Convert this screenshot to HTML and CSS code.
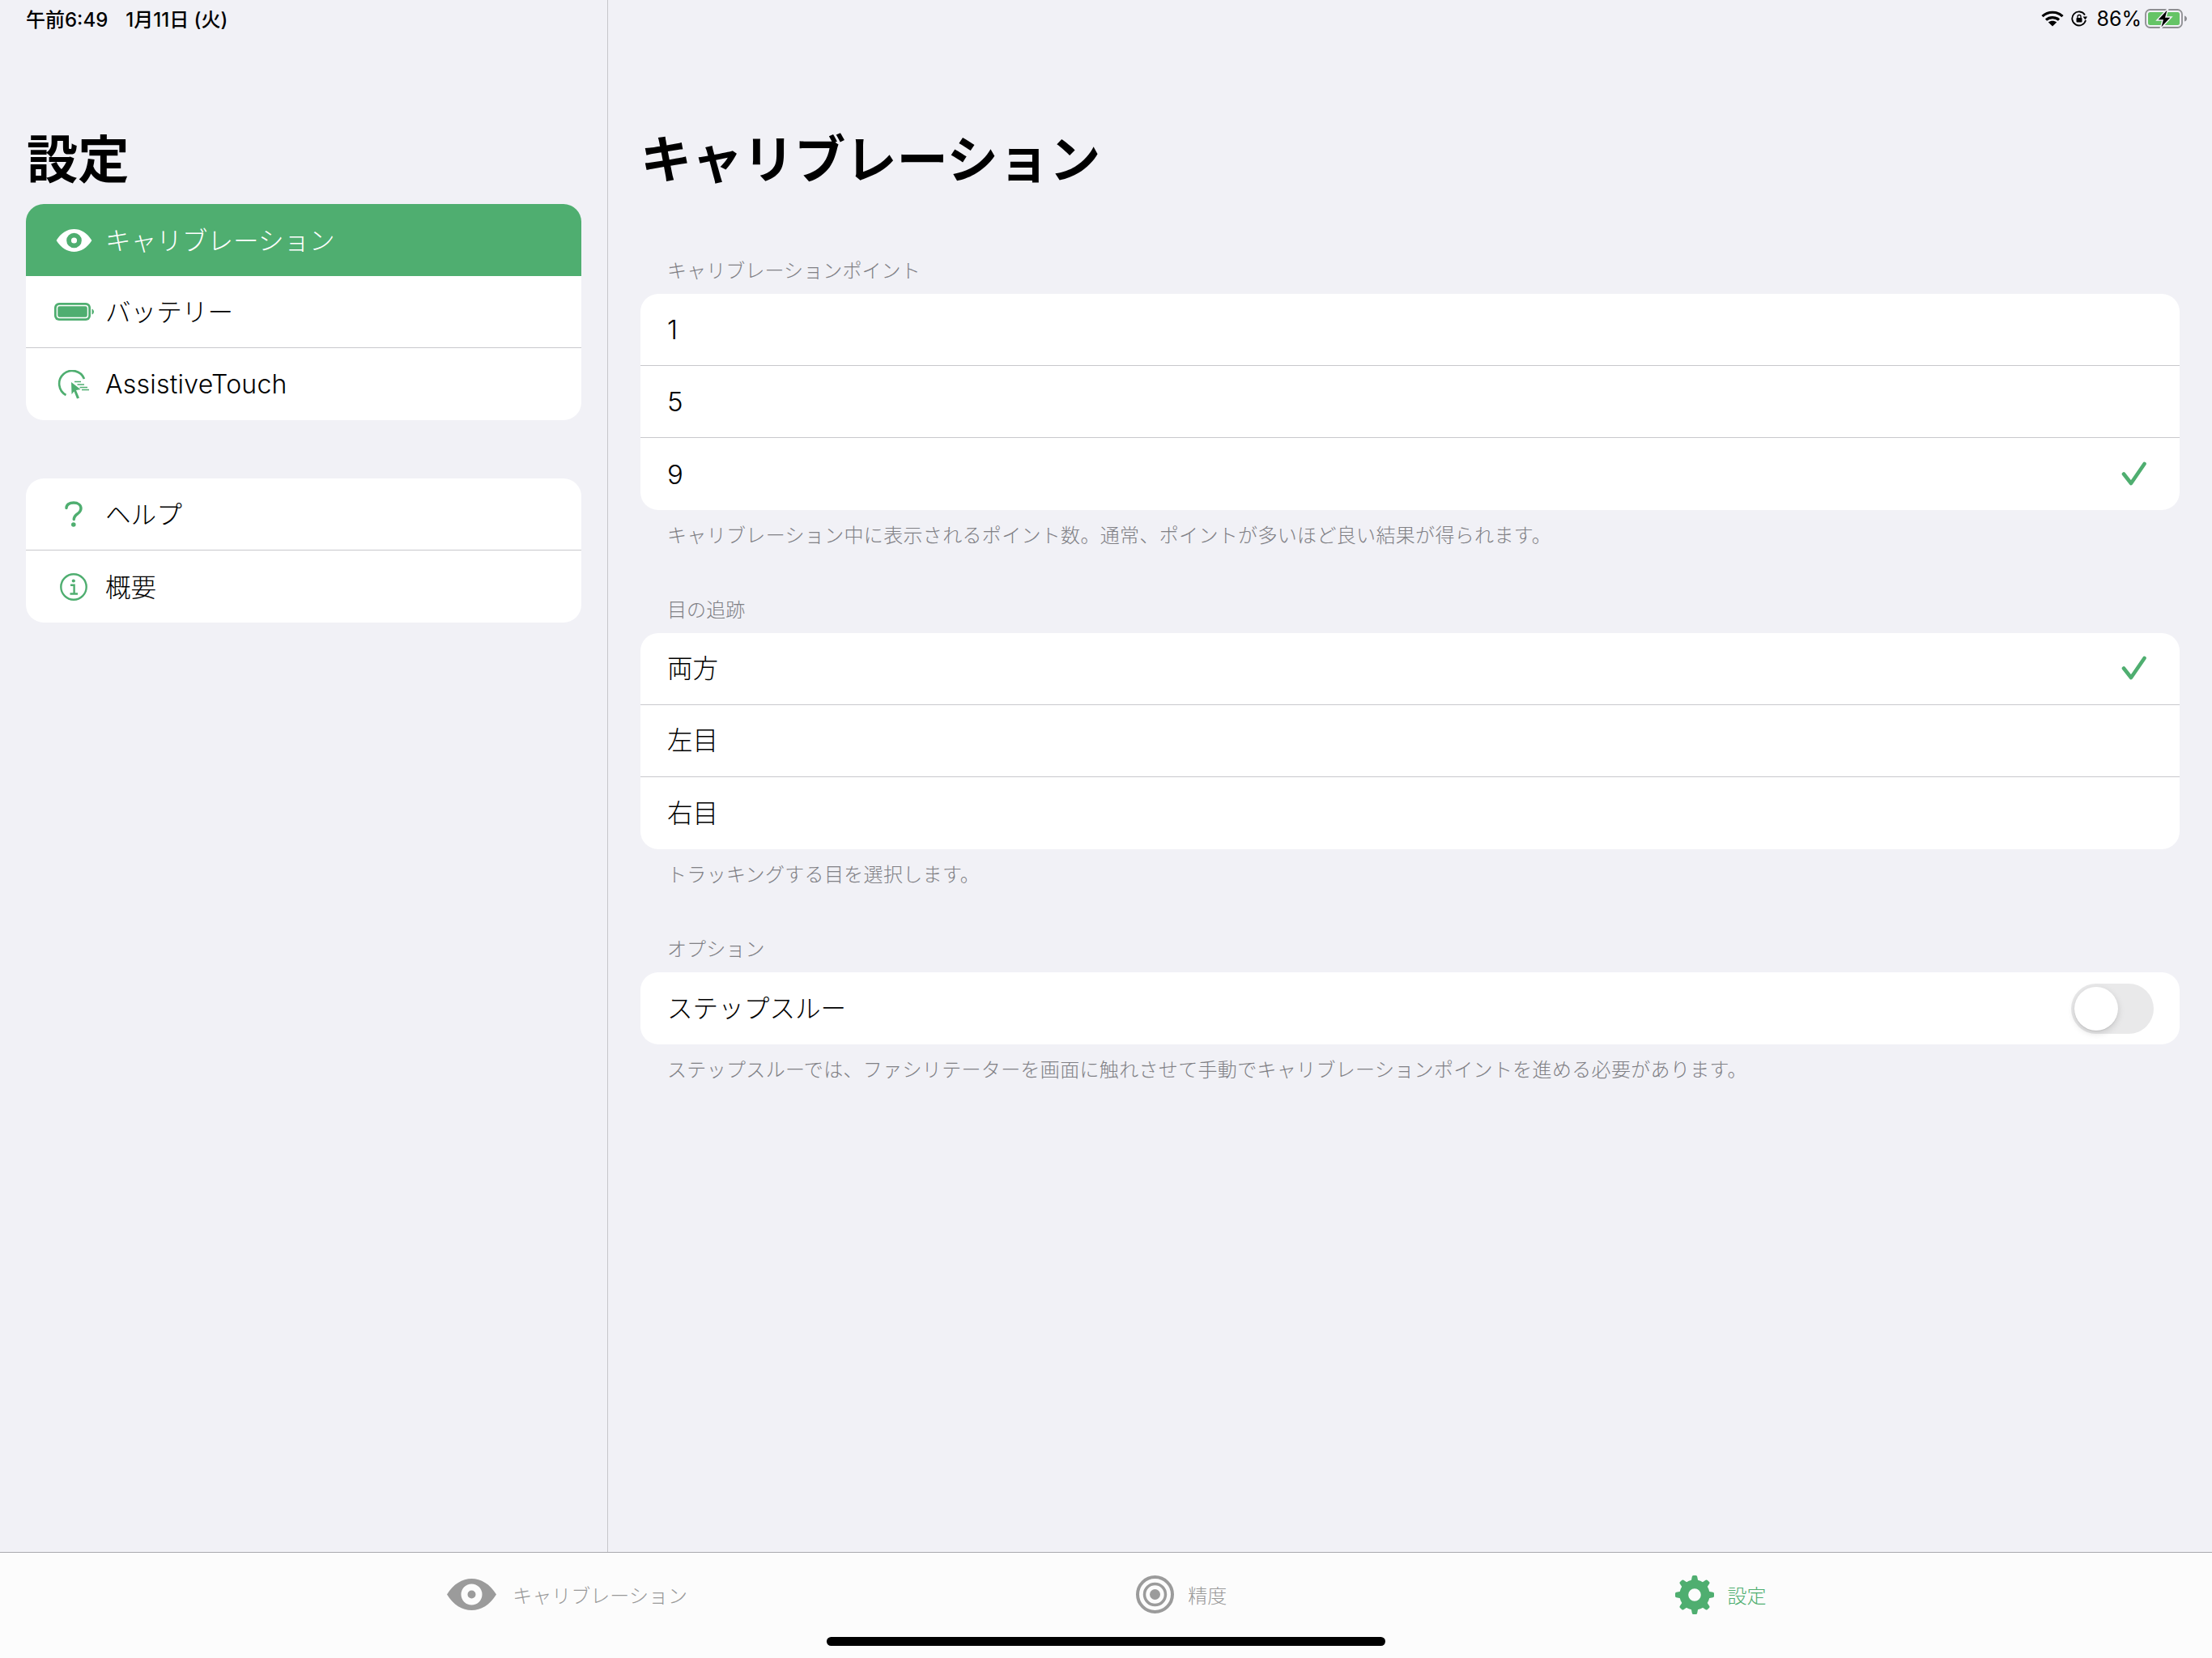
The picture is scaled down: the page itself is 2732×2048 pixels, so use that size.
FILE: index.html
```html
<!DOCTYPE html>
<html lang="ja">
<head>
<meta charset="utf-8">
<title>設定</title>
<link rel="stylesheet" href="styles.css">
</head>
<body>
<svg class="defs" width="0" height="0" aria-hidden="true">
  <symbol id="eye" viewBox="0 0 61 39">
    <path fill="currentColor" fill-rule="evenodd" d="M0 19.5C8 6.500 19 0 30.500 0S53 6.500 61 19.500C53 32.500 42 39 30.500 39S8 32.500 0 19.500ZM17.500 19.500a13 13 0 1 0 26 0a13 13 0 1 0-26 0ZM25.500 19.500a5 5 0 1 1 10 0a5 5 0 1 1-10 0Z"/>
  </symbol>
</svg>

<div class="status">
  <div class="status-left"><span>午前6:49</span><span>1月11日 (火)</span></div>
  <div class="status-right">
    <svg class="ic-wifi" viewBox="0 0 28 20" fill="none" stroke="#000" stroke-width="3.200">
      <path d="M1.500 7.200C8.500 .6 19.500 .6 26.500 7.200"/>
      <path d="M6 11.600C10.500 7.500 17.500 7.500 22 11.600"/>
      <path fill="#000" stroke="none" d="M14 19.500L8.800 14.600C11.800 12 16.200 12 19.200 14.600Z"/>
    </svg>
    <svg class="ic-lock" viewBox="0 0 20 20" fill="none" stroke="#000" stroke-width="1.800">
      <path d="M18 12A8.500 8.500 0 1 1 17 5.500"/>
      <path fill="#000" stroke="none" d="M14.500 7.500H20L17.500 11.500Z"/>
      <rect fill="#000" stroke="none" x="6.500" y="9" width="7" height="5.500" rx="1"/>
      <path stroke-width="1.300" d="M8 9.500V7.500a2 2 0 0 1 4 0V9.500"/>
    </svg>
    <span class="pct">86%</span>
    <svg class="ic-batt" viewBox="0 0 53 26">
      <rect x="1" y="2" width="45" height="22" rx="5.500" fill="none" stroke="#8e8e92" stroke-width="1.800"/>
      <rect x="4" y="5" width="39" height="16" rx="2.500" fill="#65c466"/>
      <path d="M49 9.500c2 .5 3 2 3 3.500s-1 3-3 3.500Z" fill="#8e8e92"/>
      <path d="M29 0L15 15H22L19 26L33 11H26Z" fill="#000" stroke="#f1f1f6" stroke-width="1.500"/>
    </svg>
  </div>
</div>

<div class="split">
  <aside class="sidebar">
    <h1 class="title">設定</h1>
    <div class="card">
      <div class="row side-row selected">
        <span class="slot"><svg class="ic-eye-s"><use href="#eye"/></svg></span>
        <span class="cjk">キャリブレーション</span>
      </div>
      <div class="row side-row">
        <span class="slot">
          <svg class="ic-batt-s" viewBox="0 0 49 22">
            <rect width="45" height="22" rx="6" fill="#4fae70"/>
            <rect x="3.500" y="3.500" width="38" height="15" rx="3" fill="#4fae70" stroke="#fff" stroke-width="1.500"/>
            <path d="M46.500 7.500c1.500 .5 2.500 2 2.500 3.500s-1 3-2.500 3.500Z" fill="#4fae70"/>
          </svg>
        </span>
        <span class="cjk">バッテリー</span>
      </div>
      <div class="row side-row">
        <span class="slot">
          <svg class="ic-assist" viewBox="0 0 40 36" fill="none" stroke="#4fae70">
            <path stroke-width="2.600" d="M33 11A16 16 0 1 0 10.500 31"/>
            <path fill="#4fae70" stroke="none" d="M17 15L28.500 24L23 25L27 34.500L24 35.500L20.500 26.500L17.500 30Z"/>
            <path stroke-width="1.500" d="M21 14.500H29M24.500 18H33M27.500 21.500H37M30 24.500H39"/>
          </svg>
        </span>
        <span class="latin">AssistiveTouch</span>
      </div>
    </div>
    <div class="card card-gap">
      <div class="row side-row">
        <span class="slot">
          <svg class="ic-help" viewBox="0 0 22 32" fill="none" stroke="#4fae70" stroke-width="3.400" stroke-linecap="round">
            <path d="M2 8.500C2 4.500 5.500 2 11 2s9 3 9 7c0 3-1.500 4.500-4 6.500c-3 2-4.500 3.500-4.800 7"/>
            <circle cx="10.800" cy="29" r="2.800" fill="#4fae70" stroke="none"/>
          </svg>
        </span>
        <span class="cjk">ヘルプ</span>
      </div>
      <div class="row side-row">
        <span class="slot">
          <svg class="ic-info" viewBox="0 0 34 34" fill="none" stroke="#4fae70" stroke-width="2.400">
            <circle cx="17" cy="17" r="15.700"/>
            <circle cx="16.800" cy="9.500" r="2.100" fill="#4fae70" stroke="none"/>
            <path d="M13 14.800H17.600V25M12.500 25.500H22"/>
          </svg>
        </span>
        <span class="cjk">概要</span>
      </div>
    </div>
  </aside>

  <main class="main">
    <h1 class="title">キャリブレーション</h1>

    <section class="section">
      <div class="sec-head">キャリブレーションポイント</div>
      <div class="card">
        <div class="row main-row"><span>1</span></div>
        <div class="row main-row"><span>5</span></div>
        <div class="row main-row"><span>9</span>
          <svg class="ic-check" viewBox="0 0 32 32" fill="none" stroke="#4fae70" stroke-width="4.600" stroke-linecap="round" stroke-linejoin="round"><path d="M3 15.500L12 27L28.500 3"/></svg>
        </div>
      </div>
      <div class="sec-foot">キャリブレーション中に表示されるポイント数。通常、ポイントが多いほど良い結果が得られます。</div>
    </section>

    <section class="section">
      <div class="sec-head">目の追跡</div>
      <div class="card">
        <div class="row main-row"><span class="cjk">両方</span>
          <svg class="ic-check" viewBox="0 0 32 32" fill="none" stroke="#4fae70" stroke-width="4.600" stroke-linecap="round" stroke-linejoin="round"><path d="M3 15.500L12 27L28.500 3"/></svg>
        </div>
        <div class="row main-row"><span class="cjk">左目</span></div>
        <div class="row main-row"><span class="cjk">右目</span></div>
      </div>
      <div class="sec-foot">トラッキングする目を選択します。</div>
    </section>

    <section class="section">
      <div class="sec-head">オプション</div>
      <div class="card">
        <div class="row main-row"><span class="cjk">ステップスルー</span>
          <span class="toggle"><span class="knob"></span></span>
        </div>
      </div>
      <div class="sec-foot">ステップスルーでは、ファシリテーターを画面に触れさせて手動でキャリブレーションポイントを進める必要があります。</div>
    </section>
  </main>
</div>

<nav class="tabbar">
  <div class="tab">
    <svg class="ic-eye-t"><use href="#eye"/></svg>
    <span>キャリブレーション</span>
  </div>
  <div class="tab">
    <svg class="ic-target" viewBox="0 0 47 47" fill="none" stroke="#9b9b9b">
      <circle cx="23.500" cy="23.500" r="21.500" stroke-width="4"/>
      <circle cx="23.500" cy="23.500" r="13" stroke-width="3.500"/>
      <circle cx="23.500" cy="23.500" r="6.500" fill="#9b9b9b" stroke="none"/>
    </svg>
    <span>精度</span>
  </div>
  <div class="tab tab-on">
    <svg class="ic-gear" viewBox="0 0 48 48" fill="#4fae70">
      <circle cx="24" cy="24" r="13.200" fill="none" stroke="#4fae70" stroke-width="10.800"/>
      <path d="M19.500 8L20.800 1.500Q21 0 22.500 0H25.500Q27 0 27.200 1.500L28.500 8Z"/>
      <path transform="rotate(45 24 24)" d="M19.500 8L20.800 1.500Q21 0 22.500 0H25.500Q27 0 27.200 1.500L28.500 8Z"/>
      <path transform="rotate(90 24 24)" d="M19.500 8L20.800 1.500Q21 0 22.500 0H25.500Q27 0 27.200 1.500L28.500 8Z"/>
      <path transform="rotate(135 24 24)" d="M19.500 8L20.800 1.500Q21 0 22.500 0H25.500Q27 0 27.200 1.500L28.500 8Z"/>
      <path transform="rotate(180 24 24)" d="M19.500 8L20.800 1.500Q21 0 22.500 0H25.500Q27 0 27.200 1.500L28.500 8Z"/>
      <path transform="rotate(225 24 24)" d="M19.500 8L20.800 1.500Q21 0 22.500 0H25.500Q27 0 27.200 1.500L28.500 8Z"/>
      <path transform="rotate(270 24 24)" d="M19.500 8L20.800 1.500Q21 0 22.500 0H25.500Q27 0 27.200 1.500L28.500 8Z"/>
      <path transform="rotate(315 24 24)" d="M19.500 8L20.800 1.500Q21 0 22.500 0H25.500Q27 0 27.200 1.500L28.500 8Z"/>
    </svg>
    <span>設定</span>
  </div>
  <div class="home"></div>
</nav>
</body>
</html>
```

FILE: styles.css
```css
* { box-sizing: border-box; }
html, body { margin: 0; padding: 0; }
body {
  position: relative;
  width: 2732px;
  height: 2048px;
  overflow: hidden;
  display: flex;
  flex-direction: column;
  background: #f1f1f6;
  color: #000;
  font-family: Inter, "Noto Sans CJK JP", sans-serif;
}
.defs { position: absolute; }

/* status bar */
.status {
  position: absolute;
  top: 0;
  left: 0;
  right: 0;
  height: 45px;
  padding: 0 30px 0 32px;
  display: flex;
  justify-content: space-between;
  align-items: center;
  font-size: 24px;
  font-weight: 500;
}
.status-left { display: flex; gap: 22px; }
.status-right { display: flex; align-items: center; }
.ic-wifi { width: 28px; height: 20px; margin-right: 9px; }
.ic-lock { width: 20px; height: 20px; margin-right: 11px; }
.pct { font-weight: 400; font-size: 25px; margin-right: 4px; }
.ic-batt { width: 53px; height: 26px; }

/* layout */
.split { flex: 1; display: flex; min-height: 0; }
.sidebar {
  width: 751px;
  flex: none;
  border-right: 1px solid #c6c6ca;
  padding: 157px 32px 0;
}
.main { flex: 1; padding: 157px 40px 0; }
.title {
  margin: 0;
  font-size: 63.3px;
  line-height: 80px;
  font-weight: 700;
}
.sidebar .title { margin: 0 0 15px 1px; }
.main .title { margin: 0 0 78px 0; }
.card {
  background: #fff;
  border-radius: 22px;
  overflow: hidden;
}
.card-gap { margin-top: 72px; }
.row {
  height: 89px;
  display: flex;
  align-items: center;
  font-size: 32px;
  font-weight: 350;
  border-bottom: 1px solid #c8c8cc;
}
.row:last-child { border-bottom: none; }
.cjk { font-size: 31.6px; font-weight: 300; padding-bottom: 4px; }
.latin { letter-spacing: .25px; }
.side-row { padding-left: 31px; gap: 11px; }
.slot { width: 56px; display: flex; justify-content: center; align-items: center; }
.selected { background: #4fae70; color: #fff; border-bottom: none; }
.main-row { padding: 0 32px 0 33px; justify-content: space-between; font-size: 33px; }
.main-row .cjk { padding-bottom: 6px; }

/* sections */
.section { margin-bottom: 54px; }
.sec-head, .sec-foot {
  padding-left: 33px;
  font-size: 24px;
  line-height: 36px;
  font-weight: 300;
  color: #808085;
}
.sec-head { padding: 2px 0 10px 33px; letter-spacing: .1px; }
.sec-foot { padding-top: 14px; letter-spacing: .33px; }

/* icons */
.ic-eye-s { width: 45px; height: 28px; color: #fff; }
.ic-batt-s { width: 49px; height: 22px; }
.ic-assist { width: 40px; height: 36px; }
.ic-help { width: 22px; height: 32px; }
.ic-info { width: 34px; height: 34px; }
.ic-check { width: 32px; height: 32px; margin-right: 8px; }
.ic-eye-t { width: 61px; height: 39px; color: #9b9b9b; }
.ic-target { width: 47px; height: 47px; }
.ic-gear { width: 48px; height: 48px; }

/* toggle */
.toggle {
  position: relative;
  width: 102px;
  height: 62px;
  border-radius: 31px;
  background: #e9e9ea;
}
.knob {
  position: absolute;
  left: 4px;
  top: 4px;
  width: 54px;
  height: 54px;
  border-radius: 50%;
  background: #fff;
  box-shadow: 0 3px 8px rgba(0, 0, 0, .15), 0 1px 1px rgba(0, 0, 0, .08);
}

/* tab bar */
.tabbar {
  position: relative;
  height: 131px;
  flex: none;
  background: #fcfcfc;
  border-top: 1px solid #a9a9ae;
  padding: 0 0 27px 2px;
  display: flex;
  justify-content: space-evenly;
  align-items: center;
}
.tab {
  display: flex;
  align-items: center;
  gap: 17px;
  font-size: 24px;
  font-weight: 300;
  color: #999;
}
.tab:nth-child(1) { gap: 20px; padding-right: 4px; }
.tab:nth-child(2) { padding-right: 3px; }
.tab-on { color: #4fae70; }
.home {
  position: absolute;
  left: 1021px;
  bottom: 15px;
  width: 690px;
  height: 11px;
  border-radius: 6px;
  background: #000;
}
```
